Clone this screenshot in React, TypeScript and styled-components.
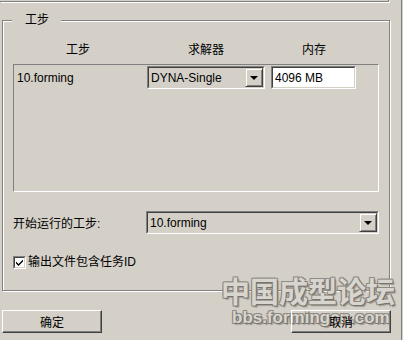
import React from 'react';
import styled, { createGlobalStyle } from 'styled-components';

const GlobalStyle = createGlobalStyle`
  html, body {
    margin: 0;
    padding: 0;
    background: #d4d0c8;
  }
  body {
    font-family: "Liberation Sans", "Noto Sans CJK SC", sans-serif;
    font-size: 12px;
    color: #000;
  }
`;

const Page = styled.div`
  position: relative;
  width: 403px;
  height: 340px;
  display: flex;
  overflow: hidden;
`;

const Main = styled.div`
  width: 391px;
  display: flex;
  flex-direction: column;
`;

const RightEdge = styled.div`
  width: 1px;
  margin-left: 10px;
  background: #808080;
`;

// bottom edge of the panel above, only its etched corner shows
const TopStrip = styled.div`
  width: 388px;
  height: 1px;
  border-right: 1px solid #808080;
  border-bottom: 1px solid #808080;
  box-shadow: 1px 1px 0 #fff;
`;

const GroupBox = styled.div`
  position: relative;
  margin: 18px 0 0 2px;
  width: 388px;
  height: 271px;
  box-sizing: border-box;
  border: 1px solid #808080;
  box-shadow: 1px 1px 0 #fff, inset 1px 1px 0 #fff;
  padding: 0 10px;
`;

const GroupTitle = styled.div`
  position: absolute;
  top: -8px;
  left: 9px;
  padding: 0 12px 0 13px;
  background: #d4d0c8;
  line-height: 14px;
`;

const HeaderRow = styled.div`
  display: flex;
  margin-top: 22px;
  height: 14px;
  line-height: 14px;
`;

const HeaderCell = styled.div<{ $w: number }>`
  width: ${p => p.$w}px;
  text-align: center;
`;

const ListBox = styled.div`
  margin-top: 7px;
  height: 128px;
  box-sizing: border-box;
  border: 1px solid;
  border-color: #808080 #fff #fff #808080;
`;

const ListRow = styled.div`
  display: flex;
  align-items: center;
  padding-top: 1px;
`;

const NameCell = styled.div`
  width: 133px;
  box-sizing: border-box;
  padding-left: 3px;
`;

const Sunken = styled.div<{ $w?: number }>`
  ${p => (p.$w ? `width: ${p.$w}px;` : 'flex: 1;')}
  height: 23px;
  box-sizing: border-box;
  border: 1px solid;
  border-color: #808080 #fff #fff #808080;
  display: flex;
`;

const SunkenInner = styled.div<{ $white?: boolean }>`
  flex: 1;
  display: flex;
  align-items: stretch;
  border: 1px solid;
  border-color: #404040 #d4d0c8 #d4d0c8 #404040;
  background: ${p => (p.$white ? '#fff' : '#d4d0c8')};
`;

const FieldText = styled.div`
  flex: 1;
  display: flex;
  align-items: center;
  padding-left: 2px;
  white-space: nowrap;
`;

const DropButton = styled.div`
  width: 18px;
  box-sizing: border-box;
  border: 1px solid;
  border-color: #d4d0c8 #404040 #404040 #d4d0c8;
  box-shadow: inset 1px 1px 0 #fff, inset -1px -1px 0 #808080;
  display: flex;
  align-items: center;
  justify-content: center;
`;

const Arrow = styled.div`
  width: 0;
  height: 0;
  border-left: 4px solid transparent;
  border-right: 4px solid transparent;
  border-top: 4px solid #000;
  margin-top: 1px;
`;

const Gap = styled.div<{ $w: number }>`
  width: ${p => p.$w}px;
`;

const StartRow = styled.div`
  display: flex;
  align-items: center;
  margin-top: 19px;
`;

const StartLabel = styled.div`
  width: 133px;
`;

const CheckRow = styled.div`
  display: flex;
  align-items: center;
  gap: 2px;
  margin-top: 21px;
  line-height: 14px;
`;

const CheckBox = styled.div`
  width: 13px;
  height: 13px;
  box-sizing: border-box;
  border: 1px solid;
  border-color: #808080 #fff #fff #808080;
  display: flex;
`;

const CheckInner = styled.div`
  flex: 1;
  border: 1px solid;
  border-color: #404040 #d4d0c8 #d4d0c8 #404040;
  background: #fff;
  display: flex;
`;

const ButtonRow = styled.div`
  display: flex;
  justify-content: space-between;
  margin-top: 19px;
  padding-left: 2px;
`;

const Button = styled.div`
  position: relative;
  z-index: 1;
  width: 100px;
  height: 23px;
  box-sizing: border-box;
  border: 1px solid;
  border-color: #fff #404040 #404040 #fff;
  box-shadow: inset -1px -1px 0 #808080;
  display: flex;
  align-items: center;
  justify-content: center;
`;

const Watermark = styled.div`
  position: absolute;
  left: 221px;
  top: 272px;
  display: flex;
  flex-direction: column;
  align-items: flex-start;
  pointer-events: none;
  color: #d8d5ce;
  text-shadow: 1px 1px 0 #77736d, -1px -1px 0 #8e8a84, 1px -1px 0 #8e8a84, -1px 1px 0 #8e8a84, 2px 2px 1px #a09c96;
`;

const WatermarkTitle = styled.div`
  font-family: "Noto Sans CJK SC", sans-serif;
  font-weight: 700;
  font-size: 29px;
  line-height: 36px;
`;

const WatermarkUrl = styled.div`
  margin-left: 11px;
  font-family: "Liberation Sans", sans-serif;
  font-weight: 700;
  font-size: 17px;
  line-height: 20px;
`;

const ComboBox: React.FC<{ value: string; width?: number }> = ({ value, width }) => (
  <Sunken $w={width}>
    <SunkenInner>
      <FieldText>{value}</FieldText>
      <DropButton>
        <Arrow />
      </DropButton>
    </SunkenInner>
  </Sunken>
);

const App: React.FC = () => {
  return (
    <>
      <GlobalStyle />
      <Page>
        <Main>
          <TopStrip />
          <GroupBox>
            <GroupTitle>工步</GroupTitle>
            <HeaderRow>
              <HeaderCell $w={130}>工步</HeaderCell>
              <HeaderCell $w={126}>求解器</HeaderCell>
              <HeaderCell $w={90}>内存</HeaderCell>
            </HeaderRow>
            <ListBox>
              <ListRow>
                <NameCell>10.forming</NameCell>
                <ComboBox value="DYNA-Single" width={118} />
                <Gap $w={6} />
                <Sunken $w={85}>
                  <SunkenInner $white>
                    <FieldText>4096 MB</FieldText>
                  </SunkenInner>
                </Sunken>
              </ListRow>
            </ListBox>
            <StartRow>
              <StartLabel>开始运行的工步:</StartLabel>
              <ComboBox value="10.forming" />
            </StartRow>
            <CheckRow>
              <CheckBox>
                <CheckInner>
                  <svg width="9" height="9" viewBox="0 0 9 9">
                    <path d="M1 3.5 L3.5 6 L8 1.5 L8 3.5 L3.5 8 L1 5.5 Z" fill="#000" />
                  </svg>
                </CheckInner>
              </CheckBox>
              <span>输出文件包含任务ID</span>
            </CheckRow>
          </GroupBox>
          <ButtonRow>
            <Button>确定</Button>
            <Button>取消</Button>
          </ButtonRow>
        </Main>
        <RightEdge />
        <Watermark>
          <WatermarkTitle>中国成型论坛</WatermarkTitle>
          <WatermarkUrl>bbs.formingcn.com</WatermarkUrl>
        </Watermark>
      </Page>
    </>
  );
};

export default App;
